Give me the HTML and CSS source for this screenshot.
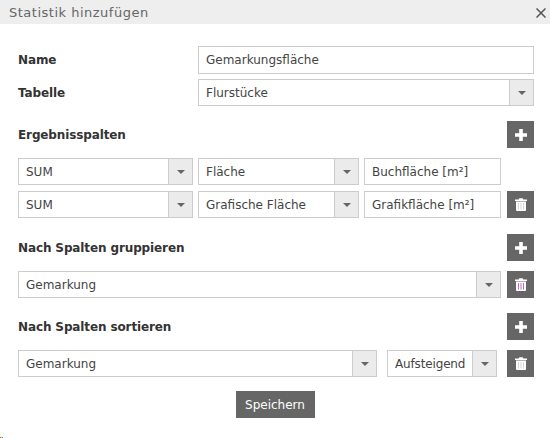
FILE: index.html
```html
<!DOCTYPE html>
<html lang="de">
<head>
    <meta charset="UTF-8">
    <meta name="viewport" content="width=device-width, initial-scale=1.0">
    <title>Statistik hinzufügen</title>
    <link rel="stylesheet" href="styles.css">
</head>
<body>
    <svg class="icon-defs" width="0" height="0">
        <symbol id="icon-plus" viewBox="0 0 12 12">
            <path d="M4.2 0h3.6v4.2H12v3.6H7.8V12H4.2V7.8H0V4.2h4.2z" fill="#fff"/>
        </symbol>
        <symbol id="icon-trash" viewBox="0 0 12 13">
            <path d="M3.6 1.6 4.3.2h3.4l.7 1.4H12v1.4H0V1.6z" fill="#fff"/>
            <path d="M1 3.6h10v8.4q0 1-1 1H2q-1 0-1-1z" fill="#fff"/>
            <path d="M3.5 5v6.6M6 5v6.6M8.5 5v6.6" stroke="currentColor" stroke-width="1" fill="none"/>
        </symbol>
        <symbol id="icon-close" viewBox="0 0 10 10">
            <path d="M.5.5l9 9M9.5.5l-9 9" stroke="#555" stroke-width="1.5" fill="none"/>
        </symbol>
    </svg>

    <div class="dialog">
        <div class="dialog-header">
            <span class="dialog-title">Statistik hinzufügen</span>
            <svg class="close-icon"><use href="#icon-close"/></svg>
        </div>
        <form class="dialog-body">
            <div class="row row-name">
                <label class="label">Name</label>
                <div class="field grow">Gemarkungsfläche</div>
            </div>
            <div class="row row-table">
                <label class="label">Tabelle</label>
                <div class="select grow"><span class="select-text">Flurstücke</span><span class="select-arrow"></span></div>
            </div>

            <div class="row section section-first">
                <span class="label grow">Ergebnisspalten</span>
                <button type="button" class="icon-button"><svg class="icon"><use href="#icon-plus"/></svg></button>
            </div>
            <div class="row row-columns">
                <div class="select w-func"><span class="select-text">SUM</span><span class="select-arrow"></span></div>
                <div class="select w-col"><span class="select-text">Fläche</span><span class="select-arrow"></span></div>
                <div class="field w-alias">Buchfläche [m²]</div>
            </div>
            <div class="row row-columns row-next">
                <div class="select w-func"><span class="select-text">SUM</span><span class="select-arrow"></span></div>
                <div class="select w-col"><span class="select-text">Grafische Fläche</span><span class="select-arrow"></span></div>
                <div class="field w-alias">Grafikfläche [m²]</div>
                <button type="button" class="icon-button delete-button"><svg class="icon-bin"><use href="#icon-trash"/></svg></button>
            </div>

            <div class="row section section-group">
                <span class="label grow">Nach Spalten gruppieren</span>
                <button type="button" class="icon-button"><svg class="icon"><use href="#icon-plus"/></svg></button>
            </div>
            <div class="row row-columns">
                <div class="select grow"><span class="select-text">Gemarkung</span><span class="select-arrow"></span></div>
                <button type="button" class="icon-button delete-button delete-active"><svg class="icon-bin"><use href="#icon-trash"/></svg></button>
            </div>

            <div class="row section section-sort">
                <span class="label grow">Nach Spalten sortieren</span>
                <button type="button" class="icon-button"><svg class="icon"><use href="#icon-plus"/></svg></button>
            </div>
            <div class="row row-columns">
                <div class="select w-sort"><span class="select-text">Gemarkung</span><span class="select-arrow"></span></div>
                <div class="select w-order"><span class="select-text">Aufsteigend</span><span class="select-arrow"></span></div>
                <button type="button" class="icon-button icon-button-sort"><svg class="icon-bin"><use href="#icon-trash"/></svg></button>
            </div>

            <div class="actions">
                <button type="button" class="save-button">Speichern</button>
            </div>
        </form>
    </div>
</body>
</html>
```

FILE: styles.css
```css
* {
    box-sizing: border-box;
}

body {
    margin: 0;
    background: #fff;
    font-family: "DejaVu Sans", Verdana, sans-serif;
    font-size: 12px;
    color: #333;
}

.icon-defs {
    position: absolute;
}

.dialog {
    position: relative;
    width: 550px;
    height: 438px;
    overflow: hidden;
}

.dialog::after {
    content: "";
    position: absolute;
    left: 0;
    bottom: 0;
    width: 3px;
    height: 1px;
    background: linear-gradient(90deg, #e05050 33%, #e8c840 33%, #e8c840 66%, #4080e0 66%);
}

.dialog-header {
    height: 24px;
    background: #eee;
    padding: 0 4px 0 9px;
    display: flex;
    align-items: center;
    justify-content: space-between;
}

.dialog-title {
    font-size: 13px;
    letter-spacing: 0.5px;
    color: #666;
}

.close-icon {
    width: 10px;
    height: 10px;
    margin-top: 2px;
}

.dialog-body {
    padding: 22px 16px 0 18px;
}

.row {
    display: flex;
    align-items: center;
}

.row-name .label,
.row-table .label {
    width: 180px;
}

.row-table {
    margin-top: 5px;
}

.label {
    font-weight: bold;
    font-size: 12px;
    letter-spacing: -0.12px;
    color: #333;
}

.grow {
    flex: 1;
}

.field,
.select {
    height: 27px;
    border: 1px solid #ccc;
    background: #fff;
    display: flex;
    align-items: center;
    font-size: 12px;
    color: #444;
    white-space: nowrap;
}

.row-name .field {
    height: 28px;
}

.field {
    padding-left: 7px;
}

.select-text {
    flex: 1;
    padding-left: 7px;
    overflow: hidden;
}

.w-order .select-text {
    letter-spacing: -0.15px;
}

.select-arrow {
    width: 24px;
    height: 100%;
    background: #ebebeb;
    border-left: 1px solid #ccc;
    display: flex;
    align-items: center;
    justify-content: center;
}

.select-arrow::after {
    content: "";
    border-style: solid;
    border-width: 4px 4.5px 0;
    border-color: #666 transparent transparent;
}

.row-columns {
    gap: 5px;
}

.row-next {
    margin-top: 6px;
}

.section-first {
    margin-top: 15px;
    margin-bottom: 10px;
}

.section-group {
    margin-top: 16px;
    margin-bottom: 10px;
}

.section-sort {
    margin-top: 15px;
    margin-bottom: 10px;
}

.w-func {
    width: 175px;
}

.w-col {
    width: 161px;
}

.w-alias {
    width: 137px;
}

.w-sort {
    width: 359px;
}

.w-order {
    width: 110px;
    margin-left: 5px;
}

.icon-button {
    width: 27px;
    height: 27px;
    flex: none;
    padding: 0;
    border: none;
    background: #666;
    color: #d6d6cc;
    display: flex;
    align-items: center;
    justify-content: center;
}

.delete-button {
    margin-left: 1px;
}

.delete-active {
    color: #c06ac0;
}

.icon-button-sort {
    margin-left: 5px;
}

.icon {
    width: 12px;
    height: 12px;
}

.icon-bin {
    width: 12px;
    height: 13px;
}

.actions {
    margin-top: 14px;
    display: flex;
    justify-content: center;
    padding-right: 2px;
}

.save-button {
    width: 79px;
    height: 27px;
    padding: 0;
    border: none;
    background: #666;
    color: #fff;
    font-family: inherit;
    font-size: 12px;
}
```
